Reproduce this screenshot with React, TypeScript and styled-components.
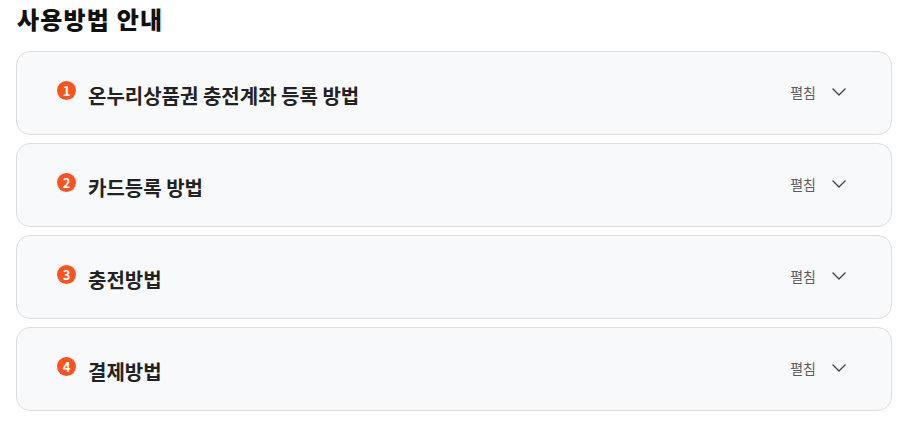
import React from 'react';
import styled, { createGlobalStyle } from 'styled-components';
import { ChevronDown } from 'lucide-react';

const GlobalStyle = createGlobalStyle`
  body {
    margin: 0;
    background: #ffffff;
    font-family: "Noto Sans CJK KR", "Noto Sans", sans-serif;
  }
`;

const GuideSection = styled.section`
  width: 876px;
  padding: 3px 0 0 16px;
`;

const Heading = styled.h2`
  margin: 0 0 16px 1px;
  font-size: 24px;
  font-weight: 900;
  line-height: 32px;
  color: #111111;
  letter-spacing: 1.2px;
`;

const List = styled.div`
  display: flex;
  flex-direction: column;
  gap: 8px;
`;

const Item = styled.div`
  display: flex;
  align-items: center;
  justify-content: space-between;
  height: 82px;
  padding: 0 40px;
  background: #f8f9fa;
  border: 1px solid #dddddd;
  border-radius: 14px;
`;

const TitleGroup = styled.div`
  display: flex;
  align-items: center;
  gap: 12px;
  margin-top: 4px;
`;

const Badge = styled.span`
  display: inline-flex;
  align-items: center;
  justify-content: center;
  flex: none;
  width: 19px;
  height: 19px;
  margin-left: 0;
  margin-top: -9px;
  border-radius: 50%;
  background: #fc5220;
  color: #ffffff;
  font-size: 13px;
  font-weight: 700;
  line-height: 1;
`;

const ItemTitle = styled.span`
  font-size: 20px;
  font-weight: 700;
  color: #222222;
  letter-spacing: 0;
`;

const Toggle = styled.div`
  display: flex;
  align-items: center;
  gap: 11px;
  color: #5c5c5c;
  font-size: 14px;
  margin-top: -2px;

  svg {
    color: #444444;
  }
`;

const STEPS = [
  '온누리상품권 충전계좌 등록 방법',
  '카드등록 방법',
  '충전방법',
  '결제방법',
];

export default function App() {
  return (
    <>
      <GlobalStyle />
      <GuideSection>
        <Heading>사용방법 안내</Heading>
        <List>
          {STEPS.map((title, index) => (
            <Item key={title}>
              <TitleGroup>
                <Badge>{index + 1}</Badge>
                <ItemTitle>{title}</ItemTitle>
              </TitleGroup>
              <Toggle>
                <span>펼침</span>
                <ChevronDown size={24} strokeWidth={1.4} />
              </Toggle>
            </Item>
          ))}
        </List>
      </GuideSection>
    </>
  );
}
